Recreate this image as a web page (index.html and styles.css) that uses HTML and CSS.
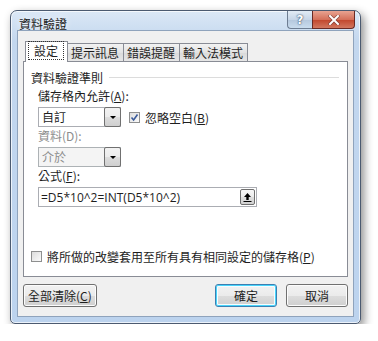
FILE: index.html
```html
<!DOCTYPE html>
<html lang="zh-Hant">
<head>
    <meta charset="UTF-8">
    <title>資料驗證</title>
    <link rel="stylesheet" href="styles.css">
</head>
<body>
    <div class="window">
        <div class="titlebar">
            <span class="title">資料驗證</span>
            <div class="caption-btns">
                <span class="cap help">?</span>
                <span class="cap close">
                    <svg width="12" height="10" viewBox="0 0 12 10"><path d="M2 1 L10 9 M10 1 L2 9" stroke="#5a2a2a" stroke-width="3.4" stroke-linecap="square" opacity="0.6"/><path d="M2 1 L10 9 M10 1 L2 9" stroke="#fff" stroke-width="2" stroke-linecap="square"/></svg>
                </span>
            </div>
        </div>
        <div class="client">
            <div class="tabs">
                <span class="tab active"><span class="focus">設定</span></span>
                <span class="tab">提示訊息</span>
                <span class="tab">錯誤提醒</span>
                <span class="tab">輸入法模式</span>
            </div>
            <div class="panel">
                <div class="group-title">資料驗證準則</div>
                <div class="field">
                    <div class="label">儲存格內允許(<u>A</u>):</div>
                    <div class="row">
                        <div class="combo">
                            <span class="combo-text">自訂</span>
                            <span class="combo-btn"><span class="arrow"></span></span>
                        </div>
                        <label class="check"><span class="box checked">
                            <svg width="9" height="9" viewBox="0 0 9 9"><path d="M1.5 4.5 L3.6 7 L7.5 1.5" stroke="#3a5a9a" stroke-width="1.6" fill="none"/></svg>
                        </span><span>忽略空白(<u>B</u>)</span></label>
                    </div>
                </div>
                <div class="field">
                    <div class="label disabled">資料(D):</div>
                    <div class="combo disabled">
                        <span class="combo-text">介於</span>
                        <span class="combo-btn"><span class="arrow"></span></span>
                    </div>
                </div>
                <div class="field">
                    <div class="label">公式(<u>F</u>):</div>
                    <div class="formula">
                        <span class="formula-text">=D5*10^2=INT(D5*10^2)</span>
                        <span class="ref-btn">
                            <svg width="9" height="10" viewBox="0 0 9 10"><path d="M4.5 1 L1 5 H3.3 V8 H5.7 V5 H8 Z" fill="#000"/><rect x="0.5" y="9" width="8" height="1" fill="#000"/></svg>
                        </span>
                    </div>
                </div>
                <label class="check apply"><span class="box"></span><span>將所做的改變套用至所有具有相同設定的儲存格(<u>P</u>)</span></label>
            </div>
            <div class="buttons">
                <span class="btn">全部清除(<u>C</u>)</span>
                <div class="btn-group">
                    <span class="btn default">確定</span>
                    <span class="btn">取消</span>
                </div>
            </div>
        </div>
    </div>
</body>
</html>
```

FILE: styles.css
```css
body {
    margin: 0;
    background: #fff;
    font-family: "Noto Sans CJK TC", "Noto Sans", sans-serif;
    font-size: 12px;
    color: #1e1e1e;
}
.window {
    margin: 10px 0 0 10px;
    width: 349px;
    height: 312px;
    border: 1px solid #4b5a70;
    border-radius: 7px 7px 5px 5px;
    background: linear-gradient(to bottom, #dbe8f6 0, #c3d7ee 30px, #bcd3ee 100%);
    box-shadow: 3px 4px 10px rgba(0, 0, 0, 0.45), inset 0 0 0 1px rgba(255, 255, 255, 0.7);
    display: flex;
    flex-direction: column;
}
.titlebar {
    height: 19px;
    display: flex;
    justify-content: space-between;
    align-items: flex-start;
    padding-left: 8px;
}
.title {
    margin-top: 4px;
    font-size: 12px;
    color: #1a1a1a;
    text-shadow: 0 0 6px #fff;
}
.caption-btns {
    display: flex;
    margin-right: 5px;
}
.cap {
    height: 17px;
    display: flex;
    align-items: center;
    justify-content: center;
    border: 1px solid #6d7d92;
    border-top: none;
}
.help {
    width: 24px;
    border-radius: 0 0 0 4px;
    background: linear-gradient(to bottom, #e2ebf5, #c7d6e8 50%, #b4c7dd 51%, #c9dcee);
    color: #fff;
    font-family: "DejaVu Sans", sans-serif;
    font-weight: bold;
    font-size: 12px;
    text-shadow: 0 0 2px #354a66, 0 0 1px #354a66;
    border-right: none;
}
.close {
    width: 41px;
    border-radius: 0 0 4px 0;
    background: linear-gradient(to bottom, #e8a391, #d4705a 50%, #c1452b 51%, #d2775f);
    border-color: #6a2a24;
}
.client {
    flex: 1;
    margin: 0 6px 6px 6px;
    background: #f0f0f0;
    border: 1px solid #8fa3bc;
    padding: 10px 5px 6px 5px;
    display: flex;
    flex-direction: column;
}
.tabs {
    display: flex;
    padding-left: 2px;
    height: 20px;
    align-items: flex-end;
    position: relative;
    z-index: 1;
}
.tab {
    height: 17px;
    padding: 0 4px 0 3px;
    line-height: 17px;
    border: 1px solid #898c95;
    border-bottom: none;
    margin-right: -1px;
    background: linear-gradient(to bottom, #f2f2f2, #e3e3e3 50%, #dadada 51%, #e6e6e6);
    color: #1e1e1e;
}
.tab.active {
    height: 20px;
    background: #fff;
    margin-right: -1px;
    padding: 0 3px 0 2px;
    line-height: 18px;
    margin-bottom: -1px;
}
.focus {
    border: 1px dotted #333;
    padding: 0 5px;
}
.panel {
    background: #fff;
    border: 1px solid #898c95;
    height: 216px;
    padding: 7px 8px 0 7px;
    box-sizing: border-box;
    display: flex;
    flex-direction: column;
}
.group-title {
    display: flex;
    align-items: center;
    gap: 6px;
    height: 16px;
}
.group-title::after {
    content: "";
    flex: 1;
    border-top: 1px solid #dcdcdc;
}
.field {
    padding-left: 7px;
    margin-top: 3px;
}
.field + .field {
    margin-top: 1px;
}
.label {
    height: 16px;
    line-height: 16px;
    margin-bottom: 3px;
}
.disabled {
    color: #8d8d8d;
}
.row {
    display: flex;
    align-items: center;
    gap: 8px;
}
.combo {
    width: 83px;
    height: 20px;
    border: 1px solid #abadb3;
    box-sizing: border-box;
    display: flex;
    background: #fff;
}
.combo.disabled {
    background: #f4f4f4;
    border-color: #adb2b5;
}
.combo-text {
    flex: 1;
    line-height: 18px;
    padding-left: 3px;
}
.combo-btn {
    width: 15px;
    border: 1px solid #707070;
    margin: -1px -1px -1px 0;
    border-radius: 2px;
    background: linear-gradient(to bottom, #f2f2f2, #ebebeb 50%, #dddddd 51%, #cfcfcf);
    display: flex;
    align-items: center;
    justify-content: center;
}
.arrow {
    border-left: 3px solid transparent;
    border-right: 3px solid transparent;
    border-top: 3px solid #000;
}
.check {
    display: flex;
    align-items: center;
    gap: 5px;
}
.box {
    width: 11px;
    height: 11px;
    box-sizing: border-box;
    border: 1px solid #8e8f8f;
    background: linear-gradient(135deg, #dcdcdc, #fbfbfb);
    display: flex;
    align-items: center;
    justify-content: center;
}
.formula {
    width: 219px;
    height: 20px;
    border: 1px solid #abadb3;
    box-sizing: border-box;
    display: flex;
    align-items: center;
    justify-content: space-between;
}
.formula-text {
    font-family: "Open Sans", "Noto Sans", sans-serif;
    font-size: 12px;
    padding-left: 2px;
}
.ref-btn {
    width: 15px;
    height: 16px;
    margin-right: 1px;
    border: 1px solid #707070;
    border-radius: 2px;
    box-sizing: border-box;
    background: linear-gradient(to bottom, #f7f7f7, #ececec 50%, #dedede 51%, #d2d2d2);
    display: flex;
    align-items: center;
    justify-content: center;
}
.apply {
    margin-top: auto;
    margin-bottom: 11px;
    color: #1e1e1e;
}
.buttons {
    display: flex;
    justify-content: space-between;
    margin-top: 7px;
}
.btn-group {
    display: flex;
    gap: 9px;
}
.btn {
    height: 23px;
    min-width: 62px;
    padding: 0 4px;
    box-sizing: border-box;
    border: 1px solid #707070;
    border-radius: 3px;
    background: linear-gradient(to bottom, #f2f2f2, #ebebeb 50%, #dddddd 51%, #cfcfcf);
    display: flex;
    align-items: center;
    justify-content: center;
    box-shadow: inset 0 0 0 1px #fcfcfc;
}
.btn.default {
    border-color: #3c7fb1;
    box-shadow: inset 0 0 0 1px #48d4fb, inset 0 0 0 2px #f6fdff;
}
u {
    text-decoration: underline;
}
```
